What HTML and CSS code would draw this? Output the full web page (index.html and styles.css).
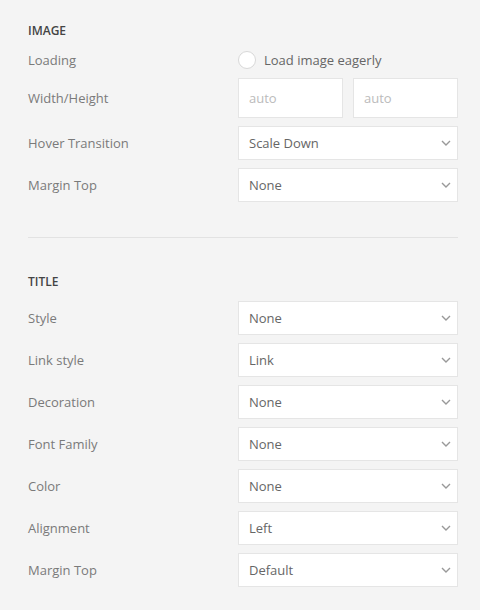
FILE: index.html
```html
<!DOCTYPE html>
<html lang="en">
<head>
    <meta charset="UTF-8">
    <meta name="viewport" content="width=device-width, initial-scale=1.0">
    <title>Element Settings</title>
    <link rel="stylesheet" href="styles.css">
</head>
<body>
    <div class="panel">
        <section class="group">
            <h3 class="group-title">Image</h3>

            <div class="field">
                <label class="field-label">Loading</label>
                <label class="radio">
                    <span class="radio-dot"></span>
                    Load image eagerly
                </label>
            </div>

            <div class="field">
                <label class="field-label">Width/Height</label>
                <div class="pair">
                    <input type="text" class="text-input" placeholder="auto">
                    <input type="text" class="text-input" placeholder="auto">
                </div>
            </div>

            <div class="field">
                <label class="field-label">Hover Transition</label>
                <div class="select"><span>Scale Down</span><svg class="chevron" viewBox="0 0 10 6"><path d="M1 1l4 4 4-4"/></svg></div>
            </div>

            <div class="field">
                <label class="field-label">Margin Top</label>
                <div class="select"><span>None</span><svg class="chevron" viewBox="0 0 10 6"><path d="M1 1l4 4 4-4"/></svg></div>
            </div>
        </section>

        <hr class="divider">

        <section class="group">
            <h3 class="group-title">Title</h3>

            <div class="field">
                <label class="field-label">Style</label>
                <div class="select"><span>None</span><svg class="chevron" viewBox="0 0 10 6"><path d="M1 1l4 4 4-4"/></svg></div>
            </div>

            <div class="field">
                <label class="field-label">Link style</label>
                <div class="select"><span>Link</span><svg class="chevron" viewBox="0 0 10 6"><path d="M1 1l4 4 4-4"/></svg></div>
            </div>

            <div class="field">
                <label class="field-label">Decoration</label>
                <div class="select"><span>None</span><svg class="chevron" viewBox="0 0 10 6"><path d="M1 1l4 4 4-4"/></svg></div>
            </div>

            <div class="field">
                <label class="field-label">Font Family</label>
                <div class="select"><span>None</span><svg class="chevron" viewBox="0 0 10 6"><path d="M1 1l4 4 4-4"/></svg></div>
            </div>

            <div class="field">
                <label class="field-label">Color</label>
                <div class="select"><span>None</span><svg class="chevron" viewBox="0 0 10 6"><path d="M1 1l4 4 4-4"/></svg></div>
            </div>

            <div class="field">
                <label class="field-label">Alignment</label>
                <div class="select"><span>Left</span><svg class="chevron" viewBox="0 0 10 6"><path d="M1 1l4 4 4-4"/></svg></div>
            </div>

            <div class="field">
                <label class="field-label">Margin Top</label>
                <div class="select"><span>Default</span><svg class="chevron" viewBox="0 0 10 6"><path d="M1 1l4 4 4-4"/></svg></div>
            </div>
        </section>
    </div>
</body>
</html>
```

FILE: styles.css
```css
html, body {
    height: 100%;
}

body {
    font-family: 'Open Sans', 'Liberation Sans', sans-serif;
    margin: 0;
    padding: 0;
    background-color: #f4f4f4;
    color: #777;
    font-size: 13px;
}

.panel {
    padding: 21px 22px 24px 28px;
}

.group {
    display: flex;
    flex-direction: column;
    gap: 8px;
}

.group-title {
    margin: 0 0 1px;
    font-size: 12px;
    font-weight: 600;
    line-height: 20px;
    text-transform: uppercase;
    color: #444;
}

.field {
    display: grid;
    grid-template-columns: 210px 220px;
    align-items: center;
}

.field-label {
    line-height: 20px;
    color: #7a7a7a;
}

/* radio option */
.radio {
    display: flex;
    align-items: center;
    gap: 8px;
    height: 20px;
    color: #666;
}

.radio-dot {
    width: 16px;
    height: 16px;
    border: 1px solid #d8d8d8;
    border-radius: 50%;
    background-color: #fff;
}

.pair {
    display: grid;
    grid-template-columns: 1fr 1fr;
    gap: 10px;
}

.text-input {
    height: 40px;
    width: 100%;
    box-sizing: border-box;
    padding: 0 10px;
    border: 1px solid #e5e5e5;
    background-color: #fff;
    font-family: inherit;
    font-size: 13px;
    color: #666;
    outline: none;
}

.text-input::placeholder {
    color: #bbb;
}

/* dropdowns */
.select {
    display: flex;
    align-items: center;
    justify-content: space-between;
    height: 34px;
    box-sizing: border-box;
    padding: 0 6px 0 10px;
    border: 1px solid #e5e5e5;
    background-color: #fff;
    color: #666;
}

.chevron {
    width: 10px;
    height: 6px;
    fill: none;
    stroke: #999;
    stroke-width: 1.4;
}

.divider {
    border: none;
    border-top: 1px solid #e2e2e2;
    margin: 35px 0 34px;
}
```
